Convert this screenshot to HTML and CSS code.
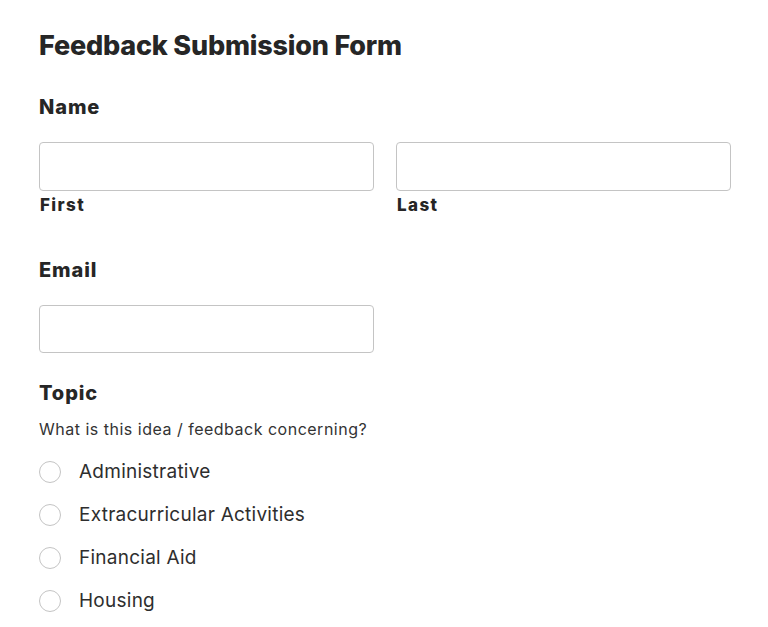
FILE: index.html
```html
<!DOCTYPE html>
<html lang="en">
<head>
<meta charset="UTF-8" />
<meta name="viewport" content="width=device-width, initial-scale=1" />
<title>Feedback Submission Form</title>
<link rel="stylesheet" href="styles.css">
</head>
<body>

<form class="feedback-form">
  <h1 class="form-title">Feedback Submission Form</h1>

  <div class="field field-name">
    <label class="field-label">Name</label>
    <div class="name-row">
      <div class="name-col">
        <input type="text" id="first-name" />
        <label class="sublabel" for="first-name">First</label>
      </div>
      <div class="name-col">
        <input type="text" id="last-name" />
        <label class="sublabel" for="last-name">Last</label>
      </div>
    </div>
  </div>

  <div class="field field-email">
    <label class="field-label" for="email">Email</label>
    <input type="email" id="email" class="half" />
  </div>

  <div class="field field-topic">
    <label class="field-label">Topic</label>
    <p class="description">What is this idea / feedback concerning?</p>
    <ul class="choices">
      <li><span class="radio"></span>Administrative</li>
      <li><span class="radio"></span>Extracurricular Activities</li>
      <li><span class="radio"></span>Financial Aid</li>
      <li><span class="radio"></span>Housing</li>
    </ul>
  </div>
</form>

</body>
</html>
```

FILE: styles.css
```css
body { margin: 0; padding: 30px 37px 0 39px; background: #fff; color: #333; font-family: Inter, "Noto Sans", sans-serif; }
.feedback-form { display: flex; flex-direction: column; }
.form-title { margin: 0; font-size: 27px; line-height: 32px; font-weight: 800; color: #262626; letter-spacing: -0.2px; }
.field-label { display: block; font-size: 20px; line-height: 24px; font-weight: 800; color: #262626; letter-spacing: 0.9px; }
.field-name { margin-top: 33px; }
.name-row { display: flex; gap: 22px; margin-top: 23px; }
.name-col { flex: 1; display: flex; flex-direction: column; }
input { box-sizing: border-box; width: 100%; height: 49px; border: 1px solid #c4c4c4; border-radius: 4px; background: #fff; font-size: 16px; padding: 0 10px; margin: 0; }
.sublabel { margin-top: 4px; padding-left: 1px; font-size: 17px; line-height: 20px; font-weight: 800; color: #262626; letter-spacing: 1.4px; }
.field-email { margin-top: 43px; }
.field-email input { margin-top: 23px; height: 48px; width: 335px; }
.field-topic { margin-top: 28px; }
.description { margin: 14px 0 0; font-size: 16px; line-height: 20px; color: #333; letter-spacing: 0.5px; }
.choices { list-style: none; margin: 11px 0 0; padding: 0; }
.choices li { display: flex; align-items: center; height: 43px; font-size: 19px; color: #2e2e2e; letter-spacing: 0.25px; }
.radio { box-sizing: border-box; width: 22px; height: 22px; border: 1px solid #c4c4c4; border-radius: 50%; margin-right: 18px; }
```
